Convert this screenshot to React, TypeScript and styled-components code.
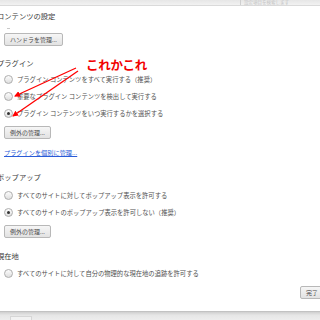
import React from 'react'
import styled, { createGlobalStyle } from 'styled-components'

const GlobalStyle = createGlobalStyle`
  html, body {
    margin: 0;
    padding: 0;
    background: #fff;
  }
  body {
    font-family: "Noto Sans CJK JP", "Noto Sans", sans-serif;
  }
`

const Page = styled.div`
  position: relative;
  width: 320px;
  height: 320px;
  overflow: hidden;
  background: #fff;
  display: flex;
  flex-direction: column;
`

const TopBar = styled.div`
  height: 5px;
  flex: none;
  display: flex;
  justify-content: flex-end;
  background: linear-gradient(#e6e6e6, #f2f2f2);
  border-bottom: 1px solid #dadada;
`

const SearchHint = styled.div`
  width: 76px;
  border-left: 1px solid #cfcfcf;
  padding-left: 3px;
  font-size: 4.5px;
  line-height: 5px;
  color: #c4c4c4;
  white-space: nowrap;
`

const Content = styled.div`
  flex: 1;
  display: flex;
  flex-direction: column;
  align-items: flex-start;
  padding-left: 4px;
`

const Heading = styled.div<{ $top: number }>`
  margin-top: ${({ $top }) => $top}px;
  margin-left: -7px;
  height: 10px;
  line-height: 10px;
  font-size: 7.3px;
  color: #3a3a3a;
  white-space: nowrap;
`

const Dash = styled.div`
  width: 3px;
  height: 1px;
  margin: 7px 0 4px 3px;
  background: #c8c8c8;
`

const Button = styled.div<{ $top: number }>`
  margin-top: ${({ $top }) => $top}px;
  height: 11px;
  padding: 0 5px;
  display: flex;
  align-items: center;
  font-size: 6px;
  color: #4a4a4a;
  background: linear-gradient(#f6f6f6, #e2e2e2);
  border: 1px solid #b8b8b8;
  border-radius: 2px;
  white-space: nowrap;
`

const RadioRow = styled.div<{ $top?: number }>`
  margin-top: ${({ $top }) => $top ?? 0}px;
  height: 17px;
  display: flex;
  align-items: center;
  gap: 4px;
  padding-left: 0;
  font-size: 6.3px;
  color: #505050;
  white-space: nowrap;
`

const RadioDot = styled.span<{ $checked?: boolean }>`
  width: 7px;
  height: 7px;
  flex: none;
  border-radius: 50%;
  border: 1px solid #aeaeae;
  background: linear-gradient(#fdfdfd, #dedede);
  display: flex;
  align-items: center;
  justify-content: center;
  &::after {
    content: '';
    display: ${({ $checked }) => ($checked ? 'block' : 'none')};
    width: 3px;
    height: 3px;
    border-radius: 50%;
    background: #333;
  }
`

const Link = styled.a`
  margin-top: 9px;
  height: 10px;
  line-height: 10px;
  font-size: 6.2px;
  color: #2a5bd7;
  text-decoration: underline;
  white-space: nowrap;
`

const FooterRow = styled.div`
  align-self: stretch;
  display: flex;
  justify-content: flex-end;
  margin-right: -4px;
`

const BottomBar = styled.div`
  height: 8px;
  flex: none;
  margin-top: 7px;
  background: linear-gradient(#cfcfcf, #e6e6e6 40%, #ededed);
  border-top: 1px solid #c2c2c2;
  display: flex;
  align-items: flex-end;
  padding-left: 10px;
`

const BottomTab = styled.div`
  width: 20px;
  height: 3px;
  background: #f2f2f2;
  border: 1px solid #d6d6d6;
  border-bottom: none;
`

const Callout = styled.div`
  position: absolute;
  left: 86px;
  top: 55px;
  font-size: 12.5px;
  font-weight: 700;
  color: #f20000;
  letter-spacing: -0.3px;
  text-shadow: 0 0 2px #fff, 1px 1px 1px #fff;
  white-space: nowrap;
`

const ArrowLayer = styled.svg`
  position: absolute;
  left: 0;
  top: 0;
  pointer-events: none;
`

const Arrows = () => (
  <ArrowLayer width="320" height="320" viewBox="0 0 320 320">
    <defs>
      <marker id="head" markerWidth="6" markerHeight="6" refX="5" refY="3" orient="auto" markerUnits="userSpaceOnUse">
        <path d="M0 0 L6 3 L0 6 Z" fill="#f00" />
      </marker>
    </defs>
    <line x1="76" y1="68" x2="15" y2="96" stroke="#f00" strokeWidth="1.3" markerEnd="url(#head)" />
    <line x1="78" y1="71" x2="13" y2="116" stroke="#f00" strokeWidth="1.3" markerEnd="url(#head)" />
  </ArrowLayer>
)

export default function App() {
  return (
    <>
      <GlobalStyle />
      <Page>
        <TopBar>
          <SearchHint>設定項目を検索します</SearchHint>
        </TopBar>
        <Content>
          <Heading $top={5}>コンテンツの設定</Heading>
          <Dash />
          <Button $top={0}>ハンドラを管理...</Button>

          <Heading $top={12}>プラグイン</Heading>
          <RadioRow $top={3}>
            <RadioDot />
            プラグイン コンテンツをすべて実行する（推奨）
          </RadioRow>
          <RadioRow>
            <RadioDot />
            重要なプラグイン コンテンツを検出して実行する
          </RadioRow>
          <RadioRow>
            <RadioDot $checked />
            プラグイン コンテンツをいつ実行するかを選択する
          </RadioRow>
          <Button $top={4}>例外の管理...</Button>
          <Link>プラグインを個別に管理...</Link>

          <Heading $top={14}>ポップアップ</Heading>
          <RadioRow $top={5}>
            <RadioDot />
            すべてのサイトに対してポップアップ表示を許可する
          </RadioRow>
          <RadioRow>
            <RadioDot $checked />
            すべてのサイトのポップアップ表示を許可しない（推奨）
          </RadioRow>
          <Button $top={4}>例外の管理...</Button>

          <Heading $top={13}>現在地</Heading>
          <RadioRow $top={4}>
            <RadioDot />
            すべてのサイトに対して自分の物理的な現在地の追跡を許可する
          </RadioRow>

          <FooterRow>
            <Button $top={4}>完了</Button>
          </FooterRow>
        </Content>
        <BottomBar>
          <BottomTab />
        </BottomBar>
        <Arrows />
        <Callout>これかこれ</Callout>
      </Page>
    </>
  )
}
